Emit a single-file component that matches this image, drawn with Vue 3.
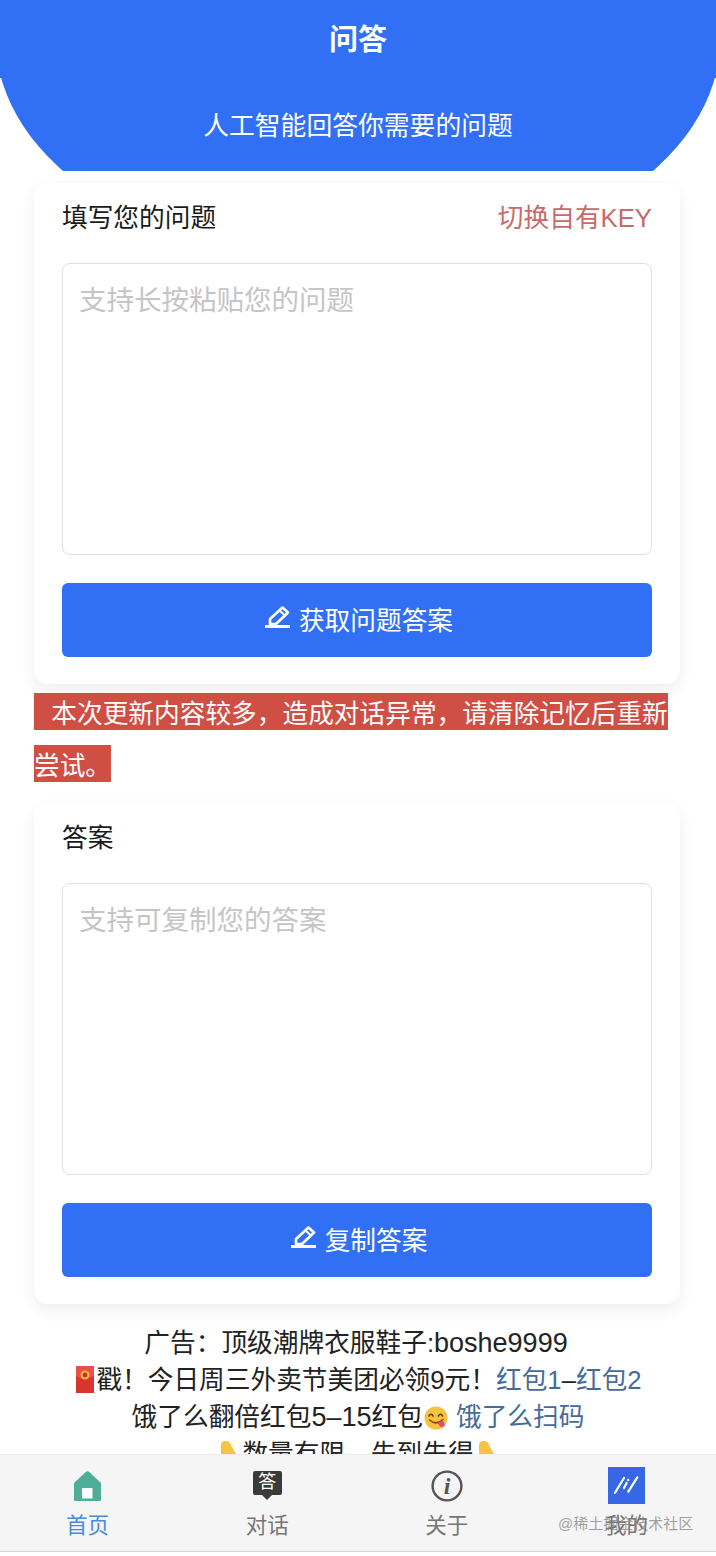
<script setup>
const tabs = [
  { key: 'home', label: '首页', active: true },
  { key: 'chat', label: '对话' },
  { key: 'about', label: '关于' },
  { key: 'mine', label: '我的' }
]
</script>

<template>
  <div class="page">
    <header class="header">
      <h1 class="title">问答</h1>
      <p class="subtitle">人工智能回答你需要的问题</p>
    </header>

    <section class="card first">
      <div class="card-head">
        <span>填写您的问题</span>
        <span class="switch-key">切换自有KEY</span>
      </div>
      <div class="textarea">支持长按粘贴您的问题</div>
      <button class="btn" type="button">
        <svg class="pen" width="25" height="24" viewBox="0 0 25 24">
          <path d="M5 18V13L17.5 1.5L23 6.5L11 18Z" fill="none" stroke="#fff" stroke-width="2.6" stroke-linejoin="round" />
          <path d="M14.5 4.5L20 9.5" stroke="#fff" stroke-width="2" />
          <path d="M0 20.5H25" stroke="#fff" stroke-width="3" />
        </svg>
        获取问题答案
      </button>
    </section>

    <p class="notice"><span>&nbsp;&nbsp;&nbsp;本次更新内容较多，造成对话异常，请清除记忆后重新尝试。</span></p>

    <section class="card">
      <div class="card-head">
        <span>答案</span>
      </div>
      <div class="textarea">支持可复制您的答案</div>
      <button class="btn" type="button">
        <svg class="pen" width="25" height="24" viewBox="0 0 25 24">
          <path d="M5 18V13L17.5 1.5L23 6.5L11 18Z" fill="none" stroke="#fff" stroke-width="2.6" stroke-linejoin="round" />
          <path d="M14.5 4.5L20 9.5" stroke="#fff" stroke-width="2" />
          <path d="M0 20.5H25" stroke="#fff" stroke-width="3" />
        </svg>
        复制答案
      </button>
    </section>

    <div class="ad">
      <div class="ad-first">广告：顶级潮牌衣服鞋子:<span class="latin">boshe9999</span></div>
      <div>
        <svg class="emoji" width="22" height="28" viewBox="0 0 22 28">
          <rect x="2" y="0" width="18" height="27" fill="#d9342f" />
          <path d="M2 0H20V10Q11 15 2 10Z" fill="#e8524a" />
          <circle cx="11" cy="9" r="4.5" fill="#f3b63f" />
          <circle cx="11" cy="9" r="2.4" fill="#c8322b" />
        </svg>戳！今日周三外卖节美团必领9元！<a class="link">红包1</a>–<a class="link">红包2</a>
      </div>
      <div>
        饿了么翻倍红包<span class="latin">5–15</span>红包<svg class="emoji" width="26" height="26" viewBox="0 0 26 26">
          <circle cx="13" cy="13" r="11.5" fill="#f7c23c" />
          <path d="M6 11Q8 7.5 10 11M15.5 11Q17.5 7.5 19.5 11" fill="none" stroke="#5a3a10" stroke-width="1.6" stroke-linecap="round" />
          <path d="M6.5 15Q13 21 20 14.5" fill="none" stroke="#7a4a12" stroke-width="1.5" stroke-linecap="round" />
          <path d="M14.5 18L20 15.5L22 20Q20 23 17 21.5Z" fill="#e8477a" />
        </svg> <a class="link">饿了么扫码</a>
      </div>
      <div>
        <svg class="emoji hand" width="26" height="26" viewBox="0 0 26 26">
          <path d="M5 26V5Q5 1 10 1Q14 1 15 5L20 14V26Z" fill="#f6c343" />
        </svg>数量有限，先到先得<svg class="emoji hand" width="26" height="26" viewBox="0 0 26 26">
          <path d="M5 26V5Q5 1 10 1Q14 1 15 5L20 14V26Z" fill="#f6c343" />
        </svg>
      </div>
    </div>

    <nav class="tabbar">
      <div v-for="tab in tabs" :key="tab.key" class="tab" :class="{ active: tab.active }">
        <div class="tab-icon">
          <svg v-if="tab.key === 'home'" width="27" height="30" viewBox="0 0 27 30">
            <path d="M0 12L12 0.8Q13.5 -0.2 15 0.8L27 12V29Q27 30 26 30H1Q0 30 0 29Z" fill="#4fae98" />
            <rect x="8" y="17" width="10.5" height="10.5" fill="#fff" />
          </svg>
          <div v-else-if="tab.key === 'chat'" class="chat-bubble">答</div>
          <svg v-else-if="tab.key === 'about'" width="32" height="32" viewBox="0 0 32 32">
            <circle cx="16" cy="16" r="14.4" fill="none" stroke="#555" stroke-width="2.4" />
            <text x="16" y="24" class="info-glyph" text-anchor="middle">i</text>
          </svg>
          <svg v-else width="37" height="37" viewBox="0 0 37 37">
            <rect width="37" height="37" fill="#3567e6" />
            <path d="M7 25.7L16 11M16 21L18.7 16M20.3 24.7L29.3 10.3" stroke="#fff" stroke-width="2.2" stroke-linecap="round" />
            <circle cx="20.2" cy="13" r="1.2" fill="#fff" />
          </svg>
        </div>
        <div class="tab-label">{{ tab.label }}</div>
      </div>
    </nav>

    <div class="watermark">@稀土掘金技术社区</div>
  </div>
</template>

<style scoped>
.page {
  position: relative;
  height: 1556px;
  overflow: hidden;
  background: #fff;
  font-family: "Liberation Sans", "Noto Sans CJK SC", sans-serif;
  color: #1a1a1a;
}

.header {
  position: relative;
  height: 171px;
  overflow: hidden;
  color: #fff;
  text-align: center;
  background: linear-gradient(#3170f5, #3170f5) top / 100% 78px no-repeat;
}

/* 下半部分是一个被裁掉的大椭圆 */
.header::before {
  content: "";
  position: absolute;
  top: -186px;
  left: -4px;
  width: 724px;
  height: 452px;
  background: #3170f5;
  border-radius: 50%;
}

.title {
  position: relative;
  margin: 2px 0 0;
  font-size: 29px;
  font-weight: 700;
  line-height: 76px;
}

.subtitle {
  position: relative;
  margin: 28px 0 0;
  font-size: 25.8px;
  line-height: 40px;
}

.card {
  box-sizing: border-box;
  width: 646px;
  height: 501px;
  margin: 13px 0 0 34px;
  padding: 0 28px;
  background: #fff;
  border-radius: 14px;
  box-shadow: 0 6px 16px rgba(0, 0, 0, 0.07);
}

.card.first {
  margin-top: 12px;
}

.card-head {
  box-sizing: border-box;
  display: flex;
  justify-content: space-between;
  align-items: center;
  height: 68px;
  padding-bottom: 4px;
  margin-bottom: 12px;
  font-size: 25.7px;
}

.switch-key {
  color: #c96a6a;
}

.textarea {
  box-sizing: border-box;
  height: 292px;
  padding: 18px 16px;
  border: 1px solid #e0e0e0;
  border-radius: 8px;
  font-size: 27.5px;
  line-height: 38px;
  color: #c5c5c5;
}

.btn {
  display: flex;
  justify-content: center;
  align-items: center;
  width: 100%;
  height: 74px;
  margin-top: 28px;
  padding: 0 0 4px 4px;
  border: none;
  border-radius: 6px;
  background: #3170f5;
  color: #fff;
  font-family: inherit;
  font-size: 25.7px;
}

.pen {
  margin-right: 9px;
}

.notice {
  width: 646px;
  margin: 2px 0 0 34px;
  font-family: "Noto Sans CJK SC", sans-serif;
  font-size: 25.7px;
  line-height: 52px;
  color: #fff;
}

.notice span {
  background: #cf4f45;
}

.ad {
  margin-top: 21px;
  font-size: 25.7px;
  line-height: 37px;
  text-align: center;
  color: #222;
}

.ad-first {
  padding-right: 4px;
}

.latin {
  font-size: 27px;
}

.link {
  color: #476a9c;
}

.emoji {
  vertical-align: -5px;
}

.emoji.hand {
  vertical-align: -3px;
}

.tabbar {
  position: absolute;
  left: 0;
  right: 0;
  bottom: 4px;
  height: 98px;
  box-sizing: border-box;
  display: grid;
  grid-template-columns: repeat(4, 179.67px);
  justify-content: start;
  background: #f5f5f5;
  border-top: 1px solid #ededed;
  border-bottom: 1px solid #d4d4d4;
}

.tab {
  margin: 0 2.3px 0 -2.3px;
  text-align: center;
  color: #757575;
}

.tab.active {
  color: #4a8ae0;
}

.tab-icon {
  display: flex;
  justify-content: center;
  align-items: center;
  height: 37px;
  margin-top: 12px;
}

.tab-label {
  margin-top: 7px;
  font-size: 21.5px;
  line-height: 30px;
}

.chat-bubble {
  position: relative;
  width: 29px;
  height: 24px;
  margin-top: -5px;
  border-radius: 2px;
  background: #3a3a3a;
  color: #fff;
  font-size: 18px;
  line-height: 22px;
  text-align: center;
}

.chat-bubble::after {
  content: "";
  position: absolute;
  left: 9.5px;
  top: 24px;
  border-left: 5px solid transparent;
  border-right: 5px solid transparent;
  border-top: 5px solid #3a3a3a;
}

.info-glyph {
  font-family: "Liberation Serif", serif;
  font-size: 24px;
  font-style: italic;
  font-weight: 700;
  fill: #555;
}

.watermark {
  position: absolute;
  left: 558px;
  top: 1513px;
  font-size: 15px;
  line-height: 22px;
  color: rgba(120, 120, 120, 0.7);
  white-space: nowrap;
}
</style>
